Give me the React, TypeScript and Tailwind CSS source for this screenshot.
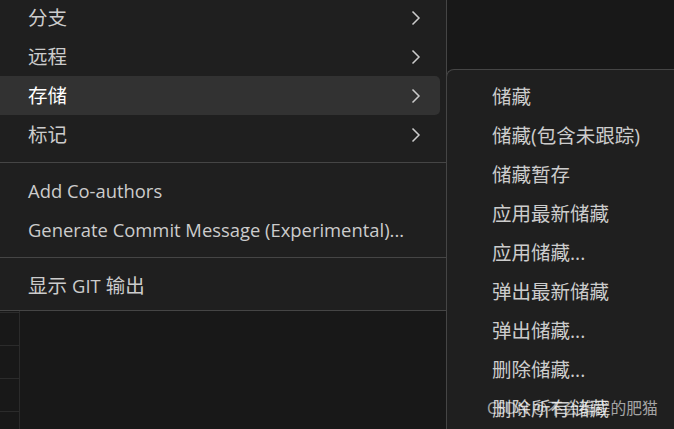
import React from 'react'

const font = { fontFamily: '"Open Sans", "Noto Sans CJK SC", sans-serif' }

function Chevron() {
  return (
    <svg width="10" height="16" viewBox="0 0 10 16" className="shrink-0">
      <polyline points="1.5,1.5 8,8 1.5,14.5" fill="none" stroke="#cccccc" strokeWidth="1.5" />
    </svg>
  )
}

function Row({ children, sub, active }: { children: React.ReactNode; sub?: boolean; active?: boolean }) {
  return (
    <div
      className={
        'flex items-center h-[39px] -ml-[6px] mr-[6px] pl-[34px] pr-[19px] rounded-[5px] ' +
        (active ? 'bg-[#323232] text-white' : 'text-[#cccccc]')
      }
    >
      <span className="flex-1 whitespace-nowrap">{children}</span>
      {sub && <Chevron />}
    </div>
  )
}

function Sep() {
  return <div className="h-px bg-[#454545] my-[8px]" />
}

const stashItems = [
  '储藏',
  '储藏(包含未跟踪)',
  '储藏暂存',
  '应用最新储藏',
  '应用储藏...',
  '弹出最新储藏',
  '弹出储藏...',
  '删除储藏...',
  '删除所有储藏',
]

export default function App() {
  return (
    <div className="relative w-[674px] h-[429px] overflow-hidden bg-[#181818] text-[19.5px]" style={font}>
      <div className="w-[447px] -mt-[2px] bg-[#1f1f1f] border-r border-b border-[#454545] pb-[5px]">
        <Row sub>分支</Row>
        <Row sub>远程</Row>
        <Row sub active>存储</Row>
        <Row sub>标记</Row>
        <Sep />
        <Row><span className="text-[18.4px]">Add Co-authors</span></Row>
        <Row><span className="text-[18.4px]">Generate Commit Message (Experimental)...</span></Row>
        <Sep />
        <Row>显示 <span className="text-[18.4px]">GIT</span> 输出</Row>
      </div>

      <div className="flex h-full">
        <div className="w-[20px] border-r border-[#2b2b2b] pt-px">
          <div className="h-[33px] border-t border-[#2b2b2b]" />
          <div className="h-[33px] border-t border-[#2b2b2b]" />
          <div className="h-[33px] border-t border-[#2b2b2b]" />
          <div className="h-[33px] border-t border-[#2b2b2b]" />
        </div>
        <div className="flex-1" />
      </div>

      <div className="absolute left-[446px] top-[69px] w-[300px] h-[400px] bg-[#1f1f1f] border-l border-t border-[#454545] rounded-tl-[8px] pt-[7px]">
        {stashItems.map((s) => (
          <div key={s} className="flex items-center h-[39px] pl-[45px] text-[#cccccc] whitespace-nowrap">
            {s}
          </div>
        ))}
      </div>

      <div className="absolute left-[487px] top-[397px] text-[15.8px] leading-[22px] text-white/60 whitespace-nowrap">
        CSDN @不会编程的肥猫
      </div>
    </div>
  )
}
